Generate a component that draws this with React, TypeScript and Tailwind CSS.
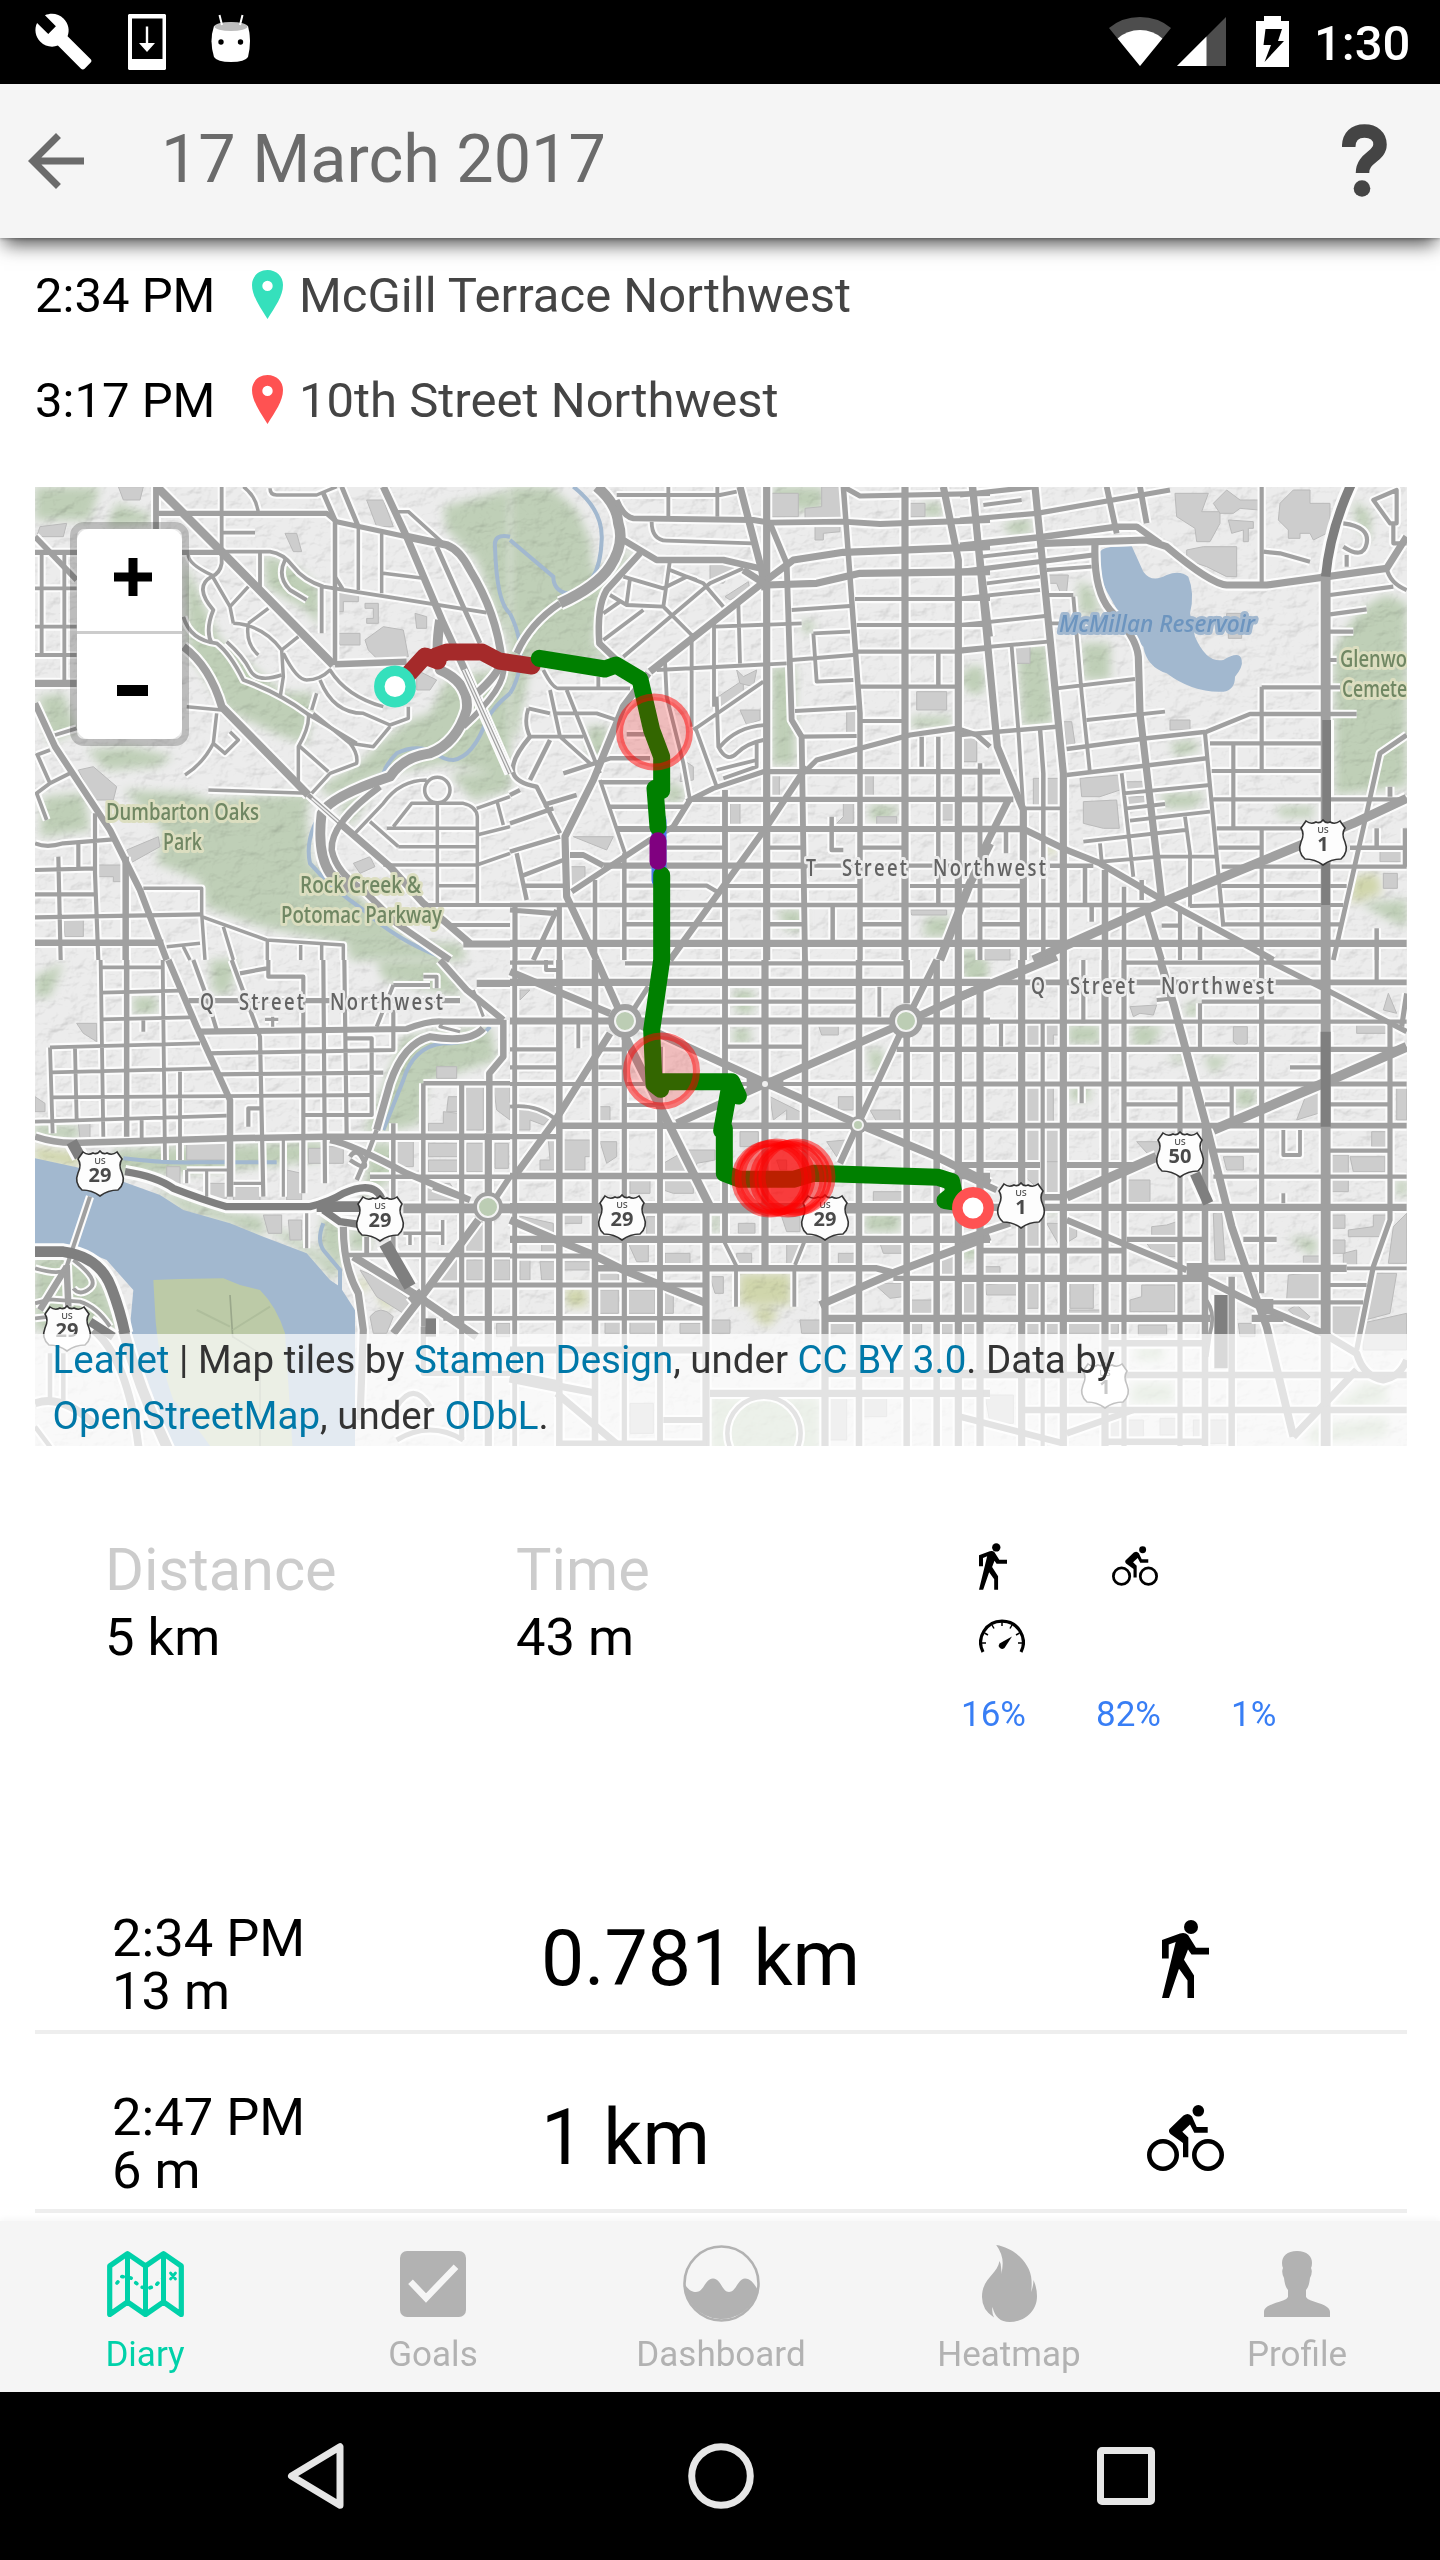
import React from "react";
import { MdArrowBack, MdBuild } from "react-icons/md";

type Road = [number, string];
type Tile = { x: number; y: number; roads: Road[]; dark: Road[]; green: string[]; sand: string[]; creek: string[]; water: string[]; built: string[] };

/* Map sheets. Coordinates inside a sheet are thirds of a pixel. */
const tiles: Tile[] = [
  {
    x: 30, y: 480,
    roads: [
      [24, "M380 20L575 215L910 555"], [12, "M915 120V555"], [18, "M915 553L1130 545"], [20, "M15 610H140"], [16, "M378 20V215"], [14, "M15 217H575"],
      [14, "M385 100H890L920 125L1130 170"], [22, "M1130 170L1250 195Q1290 210 1320 270Q1400 400 1415 540Q1410 580 1330 650"],
      [10, "M575 20V250Q570 280 545 290Q490 320 550 390Q525 450 545 490"], [20, "M1060 20L1130 170L1240 430L1300 560L1440 880"], [16, "M15 170L140 300"],
      [22, "M460 500Q540 560 575 680L835 945"], [20, "M930 1030L1080 1160L1180 1270L1320 1390"], [12, "M835 945L930 1030"],
      [18, "M15 670L75 800L240 1050L330 1230L410 1440"],
      [10, "M15 325H140M15 440H140M15 525H140M35 220V520M103 220V600M75 765L140 745M20 825L60 810M60 910L120 880M20 820L60 910L20 940L50 1020"],
      [11, "M15 1090Q50 1105 100 1090L250 1078M195 1000V1180L205 1440M145 1085V1165M85 1130L92 1440M15 1170L195 1165M15 1243H200M15 1312L515 1303"],
      [18, "M15 1388H400"], [18, "M287 1130V1440"],
      [9, "M340 1225H515V1300L525 1440M515 1310L710 1380L940 1395V1440M580 1340L610 1440M712 1380V1440M812 1395V1440M875 1395V1440M410 1400L510 1390M460 1400L480 1440"],
      [9, "M470 680L575 690M560 700L550 790Q520 850 465 885M550 790L585 820L625 780L600 755M535 930L835 940"],
      [9, "M475 220Q470 250 545 285L600 380L610 430M600 380L655 320M655 430L715 385M610 430Q700 435 755 510L760 590L750 655M655 430Q645 490 685 525M755 510L805 470M760 520Q800 600 830 600Q870 600 900 570Q950 650 1060 680"],
      [10, "M460 410Q480 480 560 490Q600 520 640 600Q750 640 830 700L980 790"],
      [9, "M590 485Q640 530 660 570T755 585M870 600Q910 700 1000 700L1080 735L1135 715V680M850 700L960 790L1030 800L1080 740M860 640L845 690M835 700Q840 740 805 800V910M810 800L895 875M845 940L900 880L980 850Q985 820 960 790"],
      [10, "M575 158H675M690 220V330M575 215H720Q760 220 790 260T880 320L1370 398M765 240Q740 290 780 330L830 360M875 320V460M915 290L940 330"],
      [9, "M985 140V330M1055 160V340M1060 280L1180 295M640 20Q680 50 685 100M720 25Q720 45 740 45H860L920 20M1100 95H1135L1240 190"],
      [13, "M935 20L985 140M880 40L915 120M1220 200L1300 380L1350 490"],
      [28, "M1230 420Q1215 520 1230 570Q1320 610 1310 690Q1280 790 1200 820Q1120 830 1080 890Q900 950 875 1000Q860 1120 900 1180L960 1230"],
      [16, "M1420 560Q1430 620 1300 740"], [18, "M1050 920Q900 1030 905 1110Q920 1180 1000 1230L1100 1330L1260 1440"],
      [9, "M1184 930a38 38 0 1 0 76 0a38 38 0 1 0-76 0M1190 900Q1110 900 1060 970L970 1065M1090 1040L1145 970H1300Q1340 980 1342 1010V1270M1222 970V1270M1070 1045H1340M1105 1100H1340M1020 1025L1105 1100M1060 1155H1340L1440 1120M1225 1217H1340M1340 1065L1440 1040M1340 985L1440 950M1400 960L1420 1035"],
      [11, "M1180 1275H1440M1250 1335H1440"], [20, "M1300 1392H1440"],
    ],
    dark: [],
    green: [
      "M15 20H210L180 120H15Z", "M260 70L360 105V130L230 140Z", "M460 240L570 480L760 640L850 640L830 790L760 770L590 690L480 520Z", "M700 230Q780 230 870 330V440L830 390L710 320Z",
      "M25 650L100 640L140 750L60 790Z", "M170 810L300 800L430 830L380 860L230 870Z", "M280 930L480 940L540 960L840 940L830 1000L840 1150L1040 1290L1140 1390L940 1390L700 1340L530 1280L510 1200L380 1150L400 1050Z",
      "M1240 80L1440 30V500L1400 400L1340 240L1250 150Z", "M1200 700L1250 600L1440 560V890L1250 850L1060 880L900 950L870 920L990 850L1050 790L1140 720Z", "M40 950L160 940L180 1050L30 1070Z", "M1260 880H1440V930L1330 960Z", "M950 1390H1290L1310 1440H960Z", "M930 980L1040 910L960 1040Z",
    ],
    sand: [],
    creek: ["M1440 170Q1390 160 1395 200Q1400 370 1440 400", "M1440 640Q1390 680 1370 720Q1330 830 1270 840Q1240 840 1220 820Q1160 790 1100 820Q1070 850 1060 880Q950 930 900 960Q820 1060 840 1150Q900 1220 1000 1290Q1100 1380 1230 1430"],
    water: [],
    built: ["M1005 480L1060 440L1120 450L1135 530L1040 535L1015 510Z", "M920 340H985V365H940V395H920Z", "M1005 370H1045V430H1010V415H1030V385H1005Z", "M145 870L190 860L260 920L250 960H190Z", "M290 1110L385 1070L390 1100L300 1150Z", "M205 1155H275V1205H250V1190H205Z", "M100 1320H160V1370H105Z", "M1160 570L1220 600L1200 630L1160 630Z", "M1155 400L1190 410V445H1160Z", "M30 140L110 130L100 170H20Z", "M1010 60H1060L1090 140H1040Z", "M265 20H340L330 60H280Z", "M765 160H800L815 215H790Z", "M970 1150L1020 1130L1035 1160L990 1180Z", "M920 460H990V495H930Z"],
  },
  {
    x: 510, y: 480,
    roads: [
      [20, "M770 20V1440M1185 20V1440"], [20, "M1300 20L1345 240V1440"], [16, "M1385 20L1440 470"], [15, "M1000 20L1020 290L1050 700V1440"],
      [20, "M690 20L755 270L765 330"], [16, "M780 130L830 250L845 720L875 770L885 1440"],
      [30, "M260 20Q320 70 325 130Q345 190 300 260Q260 320 150 370"], [18, "M150 370Q60 430 20 520"],
      [16, "M320 60Q340 110 370 115L730 120L780 128L1000 125L1110 132L1440 120"], [10, "M320 45H630L680 35M475 20V110M622 20V110"], [14, "M1000 20L1050 48L1440 40"],
      [10, "M425 125Q425 180 470 182L730 190"], [18, "M340 180L440 240H640L750 265M390 220L290 330Q260 380 268 490L320 540"],
      [20, "M420 575L750 315L850 240L1000 217L1440 200"], [20, "M700 270L770 315L920 310L1050 280L1440 275"],
      [10, "M340 290L460 325L530 290L560 300M360 295L350 370M480 240L460 380M300 345L350 375L460 380L545 465M480 270L580 310L640 380M280 480L400 390M340 530L600 310L700 265M280 400L330 365"],
      [10, "M545 460V740M612 430V680M685 370L690 550M615 440L875 430M440 570L830 550M845 540L1030 525M845 390L1020 378M910 460L1020 455M910 460L920 605L1030 600"],
      [11, "M1035 357H1440M1040 435H1440M1040 515H1350L1440 505M1050 620H1345M1050 723H1185M855 693L1040 683M875 770L1040 768"], [12, "M1285 515V620M1285 770V1270M1235 770V860"],
      [10, "M550 750L760 605M620 650L625 800Q650 850 680 820T760 780M630 800Q680 740 765 735M620 870L740 840M640 895L740 860V790"],
      [14, "M530 965L610 925L760 875H1440M540 958H1440M890 870L920 840L1200 765L1340 745L1400 765L1440 800"], [18, "M890 860L770 1040L480 1440"],
      [17, "M320 1047H1440M280 1157H890"], [11, "M470 1103H640M775 1103H880M1050 1103H1185M770 1157H1440M345 1217H590L630 1240M640 1218H1045M1200 1218H1440"],
      [12, "M0 1275H1440M345 1333H640M770 1333H885M1050 1333H1185"], [20, "M0 1390H1440"], [16, "M645 930V1440"], [12, "M1410 850V1440M968 1280V1380M965 1010V1110H1000M255 1200V1440M343 1120V1440"],
      [10, "M465 545L470 650L520 850L540 960M555 740L620 920"], [20, "M415 580L340 680L250 900L165 1070L170 1250L260 1440"],
      [10, "M100 570Q130 630 150 625H360M265 590V630M120 630L150 770L240 850M170 630L270 880M270 900L345 1120M55 685Q40 730 60 770H220M55 685L120 700M130 700H260L320 720"],
      [12, "M60 770Q0 840 10 880Q20 910 80 920L150 1060M120 780L60 900M160 880L300 835H420M0 945L30 930M270 907H430M300 980H530M100 975L200 945M0 1030L130 985M0 1115L150 1070M20 1120L50 1260M30 1190L160 1140M40 1217H170M350 763H420"],
      [16, "M180 1125H220L280 1157M185 1235L420 1080L490 1040L540 960"], [14, "M0 1290L130 1300M140 1290L70 1440M15 1280V1440M148 1280V1440"], [24, "M1440 1090L1380 1210L1290 1440"],
    ],
    dark: [],
    green: ["M0 20H120L200 90L240 180L250 280L380 200L280 330L250 490L300 530L60 560L20 760L0 780Z", "M790 20H940V90H790Z", "M785 560H855V855H785Z", "M230 740H290V830H240Z", "M480 900L530 940L500 970H460Z", "M870 420L920 430L890 470Z", "M1205 710H1330L1320 740H1200Z", "M1240 70H1295V110H1240Z", "M1370 560H1420V640H1375Z", "M1080 970L1170 980L1140 1020H1080Z", "M800 1290H880V1350H830Z", "M1250 1310H1320V1370H1240Z"],
    sand: [],
    creek: ["M190 20Q280 90 275 180Q270 330 170 340Q130 330 130 290L0 180", "M0 400Q40 480 30 560Q20 610 0 640"],
    water: [],
    built: ["M785 40H865V110H785Z", "M885 85L935 80V20H995V115H885Z", "M915 135H990V155L940 160V180H915Z", "M1220 635H1310V690H1220Z", "M1360 765H1400V845H1360Z", "M1010 690H1045V760H1010Z", "M1055 880H1090V950H1055Z", "M1000 970H1030V1030H980L1000 1010Z", "M1100 1010H1160V1035H1100Z", "M660 970H690V1035H660Z", "M780 880H808V950H780Z", "M600 255H680L640 310L600 300Z", "M645 350L715 305L720 330L660 360Z", "M625 650L700 600L700 640L630 680Z", "M690 690H750V720L710 735Z", "M520 840L550 860V900L510 905Z", "M680 570L700 590L740 570L730 620L690 610Z", "M1200 70H1245V110H1200Z", "M1200 1290H1310V1305H1205Z", "M1295 970H1330V1020H1295Z", "M180 1160H225V1210L185 1220Z", "M190 1070H310L290 1110L240 1090Z"],
  },
  {
    x: 960, y: 480,
    roads: [
      [20, "M38 20L112 800L190 990V1440M225 20L310 880V1440"], [16, "M440 20L470 160M540 20L560 130"], [14, "M0 45L225 20M0 120L230 100L630 30"], [18, "M0 197L240 172L470 140L530 140L600 190"],
      [20, "M250 190L560 180L620 200Q750 310 800 315H920L1280 265L1340 170"], [14, "M0 275L400 225"], [20, "M405 190Q400 330 450 390Q530 470 535 530L540 700L605 1260"],
      [10, "M70 75L185 60M65 230L240 210M80 310L240 290M260 270L395 260M0 355L240 330M0 435L255 408M270 430L330 430M0 508L265 485M340 350L365 640L390 880M340 345H265M155 500L175 750L190 990M290 625L525 597M380 720L615 695"],
      [12, "M320 807L560 775L740 755L870 702H1190M320 885L740 835M0 765L290 740M240 745L250 880V1440"], [10, "M485 880L520 1190M490 940L750 915M500 985L615 972M510 1022L750 995M370 1085L675 1050M425 1145L600 1130H770M190 985H300M420 1090L425 1145M675 1010L690 1120V1280"],
      [11, "M735 760L790 1340M750 790H1085M820 790V1040M905 20V310M905 620V870M905 1050V1440M755 873H1090M760 958H1340M770 1045H1090M905 622H1140M775 1103H905M785 1160H1340M785 1218H1160M690 1278L850 1275H1150M790 1333H1140M605 1337H660M660 1280V1440"],
      [28, "M1097 280V1440"], [11, "M1110 345L1300 320M1110 403L1220 388M1110 455H1180M1110 540H1130M1280 265Q1290 310 1340 330M1240 60L1310 30V130H1290ZM1300 130V190H1340M1150 130Q1230 140 1220 190T1150 200M1160 225V260M910 215L960 220L1050 245"],
      [13, "M1340 765L1260 820L1220 1000L1120 1440M1290 920V950"], [26, "M1340 955L1180 1030L600 1270L220 1440"],
      [18, "M0 1047H190L320 1110L420 1150L600 1255L850 1390L940 1440"], [16, "M0 875H120M0 958H160"], [20, "M145 960L65 1120"],
      [12, "M270 1157H400M60 1218H180M0 1275H600M60 1333H180"], [20, "M0 1390H1340"], [12, "M60 870V1440M375 1160V1275M138 1050V1120M492 1220V1440M395 1280V1325M720 1340V1440M1250 1345V1440M1250 1045V1100M1170 1103H1340M1335 1045V1160M545 1200V1260"], [18, "M435 1170V1440M560 1290L605 1440"],
    ],
    dark: [[28, "M1175 10Q1110 150 1097 290"], [26, "M1100 720V1030M1097 1150V1275"]],
    green: ["M130 130L210 115L215 160L150 165Z", "M1120 520Q1180 380 1280 345L1340 370V920L1125 945V700Z", "M355 300L400 330L420 400H360Z", "M365 490H450V600H370Z", "M170 510L260 490L280 730L190 740Z", "M630 790L700 780L720 810L650 830Z", "M600 940H740L700 985H620Z", "M950 980H1060V1010H960Z", "M1200 1270L1340 1260V1340L1290 1320Z", "M1180 60L1230 100V190L1190 130Z", "M0 580H60V620H10Z", "M0 1410H60V1440H0Z"],
    sand: ["M1180 1190L1250 1180L1265 1240L1170 1270Z", "M255 1095H285V1120H260Z"],
    creek: [],
    water: ["M420 215Q430 200 470 200L515 198L550 275Q575 310 620 285Q660 270 685 290Q705 340 690 400L705 470Q740 550 790 540Q840 510 845 540Q850 560 825 590Q825 630 790 635Q700 640 620 580Q560 560 550 500L510 460L455 360Q425 310 425 290Z"],
    built: ["M645 40H745L725 95H780V130L750 185H710L705 145L650 110Z", "M760 70L800 30L840 60H895V90L840 85L820 100H780Z", "M960 70L1000 30H1050V70H1110V155L1060 180L1050 160H1020V175H985V150L955 120Z", "M680 210L730 200H830V290H800L740 260L680 240Z", "M805 120L880 125V145H865V185H850V150L815 160Z", "M370 965L470 960L478 1045H430L370 1030Z", "M360 895L480 885V930L420 950H365Z", "M495 905H555V930H495ZM505 950H560V975H505Z", "M265 285H325L320 335H300L290 310H265Z", "M165 500H210V550H165Z", "M5 765H50V845H5Z", "M310 725H335L345 790L320 800Z", "M220 895H300V975H220Z", "M630 720H690V750H630Z", "M1260 1110H1330V1145H1260Z", "M1270 1180H1312V1225H1270Z", "M70 1400H150V1440H75Z", "M800 400H845V475H805V460H830V440H800Z"],
  },
  {
    x: 30, y: 960,
    roads: [
      [18, "M15 530Q80 552 150 548L600 535L880 530H1440"], [11, "M180 710L110 920"], [18, "M110 915L115 1040M110 920L30 1050"], [10, "M15 925Q80 945 110 930M130 900Q210 960 180 985T130 985M15 1030L60 1018L150 1025Q200 1040 240 1100M15 1075L60 1070"],
      [28, "M1120 745H1440"], [15, "M290 0V530"], [10, "M212 0L220 530M215 22H400M398 0L405 600M215 98L450 92M215 178L480 172M340 175V215M60 262L510 250M60 262L68 520M135 265L140 480M65 337L550 325M65 412L1025 405M15 485L590 467M450 335V600M335 480V540"],
      [18, "M415 0L500 200L600 420V710"], [17, "M510 215L1130 207Q1200 180 1240 185H1420"], [11, "M530 280L1090 270V150M560 343L1060 338M820 465H1025V235H950M490 0L530 110L560 210M605 0L690 230L700 710M630 40L710 25M715 0V50H820V700M880 0L885 670M943 0L950 530M655 500V445H695"],
      [8, "M760 540V710M830 760V865M470 630H600M530 630V710M470 630V670M610 670H695M705 178H745M728 170V200"], [10, "M1090 75H1200M1090 75L1040 200M1180 50H1220V85"],
      [14, "M475 122H1290"], [18, "M900 540Q960 550 1130 640L1320 720M1210 680L1320 720"], [12, "M1130 650H1440M1020 650H1130M1090 490V880M1180 370V1100M1180 370H1440M950 885H1440"], [14, "M1295 370V1440"],
      [20, "M1375 780V1500M1375 520V710"], [18, "M1420 180V290L1378 340V520"], [18, "M1230 0L1310 90L1420 180"], [20, "M1340 70H1440"], [8, "M1360 170L1330 90M1240 185L1230 200L1290 215"],
      [20, "M1360 205Q1320 250 1200 230Q1120 250 1080 370L1040 510"], [12, "M1040 510L1010 590L980 660M960 590Q980 560 1000 600T960 600"], [20, "M940 800Q940 920 985 1000L1000 1110L990 1380"],
      [22, "M970 890L1150 1000L1340 1130M1345 780L1190 990L1090 1120"], [13, "M1200 975H1440M1240 1075H1440M1010 830V880"], [9, "M1120 820H1235M1238 780V855M1140 820V855"], [16, "M1400 710L1440 650"], [44, "M1150 1000L1175 1030"],
      [30, "M280 1110Q330 1300 430 1500"], [22, "M190 1110Q300 1200 330 1500M15 1330Q100 1300 200 1400"], [12, "M60 1180V1330M15 1400L90 1500M100 1180V1320"], [14, "M1100 1340Q1150 1260 1200 1340M1180 1100V1240H1440M1100 1440Q1200 1380 1300 1440"],
    ],
    dark: [[34, "M125 545L150 590"], [22, "M285 635Q380 650 430 685Q520 720 590 740H840Q900 725 940 700Q1030 660 1055 715M880 750L930 785L1000 795"], [32, "M860 740H1000"], [38, "M1065 850L1140 980"], [32, "M1202 1075V1130"], [32, "M15 875H100Q210 890 245 985Q270 1050 285 1120"], [26, "M180 1085L250 1130"]],
    green: ["M1040 0H1230L1300 110L1060 60Z", "M1380 200L1400 300L1190 365L1170 490L1090 510L1000 520L1060 380L1120 230Z", "M540 0H620L600 100H550Z", "M310 110H380V160H310Z", "M250 570L880 545V600L500 640H260Z", "M360 680L600 760L700 770V830L600 790L460 750Z", "M700 800L780 820L925 920L915 960L830 880Z", "M15 890H110Q180 910 230 990L270 1110H15Z", "M880 760L940 790V930L870 860Z", "M15 50L100 10L60 110H15Z", "M1020 550H1090V650L1000 720Z", "M960 810H1020V870H960Z", "M15 490L150 500L140 540L15 530Z"],
    sand: ["M15 560L140 580L150 625L15 600Z", "M980 950L1020 970L1000 1000ZM1040 1000L1100 1010L1070 1050Z"],
    creek: ["M280 595Q400 610 500 607H740", "M1380 200Q1340 250 1240 250Q1150 260 1120 360L1060 510", "M880 790Q860 840 880 870L930 930V1000"],
    water: ["M15 595L140 622L280 665L390 705L460 750L600 790L700 830L830 880L900 960L930 980L975 1050V1500H440L330 1200L300 1100L310 990L230 900L130 860H15Z"],
    built: ["M470 550H585V600H470Z", "M770 630L815 640V720H770Z", "M700 765H755V820H715Z", "M775 780H815V840H780Z", "M835 565H875V610H835ZM890 560H940V610H895Z", "M610 680H690V730H610ZM535 670H590V715H540Z", "M145 490H180V535H150Z", "M1195 550H1285V590H1195ZM1195 600H1285V635H1195Z", "M1195 490H1240V455L1285 460V515H1195Z", "M1255 410H1285V455H1250Z", "M1310 380H1360V510H1305Z", "M1390 375H1440V480L1400 450Z", "M1310 550H1360V635H1310ZM1395 550H1435V625H1395Z", "M1100 545H1150V620H1100Z", "M1190 670H1260L1290 720H1190Z", "M1310 830L1360 780V870L1310 880Z", "M1230 920L1290 870V965H1230ZM1310 900H1360V960H1310ZM1390 900H1440V960H1390Z", "M990 930L1060 960L1140 1020L1120 1060L1040 1010Z", "M1020 1070Q1050 1030 1090 1070L1070 1120H1030Z", "M1400 1090H1440V1130H1400Z", "M15 410L45 430V455H15Z", "M140 190H200V245L160 220Z", "M1220 320H1280V355H1220Z", "M410 620H450V680H410Z"],
  },
  {
    x: 510, y: 960,
    roads: [
      [11, "M345 10H1185M0 8H130M470 125H1040M0 268H140M265 268H340M650 260H885M265 322H340M0 322H140M0 372H1440M350 435H450M140 495H1440"], [20, "M0 67H1440M0 183H300M390 183H1140M1235 183H1440"], [18, "M140 497H1440M0 648H1440"], [30, "M0 745H1440"], [20, "M0 838H1440"],
      [14, "M1160 268H1440M0 888H250M1150 955H1440M0 975H590M0 530H140"], [18, "M250 925H1100L1160 940"], [12, "M0 1075H590"], [20, "M950 1075H1440"],
      [18, "M148 0V1500M255 0V1500M885 0V720M1047 0V1500M1190 230V1500M1190 0V130M1280 0V1500"], [13, "M14 0V1500"], [14, "M343 230V1500"], [16, "M450 260V1500M645 0V840M1410 100V1500"], [20, "M588 750V1500M945 840V1500M1345 0V1500"], [20, "M765 0V925"], [10, "M205 190V265M1108 80V170M108 0V30H150"],
      [20, "M0 35L300 160M260 0L340 180M300 220L130 490L20 640"], [14, "M415 80L370 150"], [24, "M345 230L600 740"],
      [22, "M380 190L650 315L770 370L1040 490L1280 590L1440 670M500 490L770 370L1180 190L1440 70"], [18, "M1280 0L1190 180L1045 490L990 610"],
      [22, "M0 780L140 840L250 885L340 930L590 1030M930 1035L1160 935L1440 830"], [10, "M640 840L680 920M885 840L855 915M678 930V1040M853 930V1040M0 440Q80 430 140 480"],
      [20, "M0 1250L260 1300M140 1300L330 1460M0 1170H590M600 1300H1440M950 1240H1440"], [34, "M0 1250L150 1280M710 370L820 370"], [16, "M140 1450H590M460 1380H590"], [12, "M652 1420a110 110 0 1 0 220 0a110 110 0 1 0-220 0"],
    ],
    dark: [],
    green: ["M670 90H730V160H680Z", "M670 205H720V250H670Z", "M1065 760H1170V815H1065Z", "M605 758H628V818H605Z", "M1370 0H1430V50L1380 75Z", "M1070 270H1120V340H1090Z", "M600 1310H930V1490H600Z", "M1360 860H1400V890H1360Z"],
    sand: ["M688 940H843V1035H688Z", "M720 1060L760 1040L810 1060L770 1100Z", "M165 985H230V1040H170Z"],
    creek: [], water: [],
    built: ["M25 435L80 440L125 470L100 495L60 480V510H25Z", "M265 440H300V485H265Z", "M115 540H240V590H225V630H90V600H120Z", "M270 545H320V590L290 610Z", "M30 90H60L30 120Z", "M530 570H615V600L560 610V635H460V610Z", "M460 660H550V700H490L460 690Z", "M360 660H420V700H360Z", "M690 515H745V560H690ZM800 600H830V630H810Z", "M780 410L880 460V485H830V450L790 480Z", "M950 545L1010 540L980 590Z", "M985 410H1030V450H985ZM1080 450H1170V485H1100Z", "M925 195H985V225H935Z", "M160 760H215V790H160Z", "M410 770H440V825H410Z", "M685 790H735V820H685ZM815 770H870V815H830Z", "M1090 695H1180V730H1090Z", "M15 765L130 790V830H70Z", "M95 845H135V875H95Z", "M355 850H415V905H380Z", "M465 880H540V915H465Z", "M680 880H725V915H680ZM830 850H870V915H830Z", "M985 880H1035V915H985ZM1110 850H1180V880H1120Z", "M160 905H325V965H270V930H160Z", "M30 900H60V960H30ZM90 905H135V960H95Z", "M265 990H325V1060H265Z", "M350 990H435V1060H350ZM460 1000H490V1060H465Z", "M600 950H640V1000H615Z", "M285 1085H330V1120H285ZM360 1085H440V1120H360ZM510 1090H575V1120H510Z", "M600 1080H660V1120H605ZM870 1080H930V1120H875Z", "M955 1085H1040V1120H955ZM1200 1085H1235V1120H1200ZM1295 1085H1335V1120H1295ZM1360 1085H1400V1120H1360Z", "M1090 970H1180V1010L1140 1015Z", "M1200 1020H1270V1060H1200Z", "M1290 880H1335V945H1290ZM1360 970H1400V1060H1360Z", "M960 1310H1010V1440H960ZM1060 1300H1130V1370H1060Z", "M360 1330H430V1420H360Z"],
  },
  {
    x: 960, y: 960,
    roads: [
      [20, "M60 90V1500M185 0V1500M310 0V1500M435 0V1500"], [11, "M248 180V1500M370 0V190M720 130V270M123 190V260M365 375V430M815 375V490M1250 0V60"], [14, "M492 0V1500M660 375V1500M905 0V1000"], [18, "M735 500V1500M815 950V1500"], [28, "M1097 0V1500"], [14, "M1290 180V780L1240 920L1190 1170M1340 100L1325 200"],
      [11, "M490 8H1090M725 125H1090M0 185H1340M490 433H660M735 433H815M1110 433H1290M990 322H1090M765 572H900M1110 572H1290M760 650H1340M920 1027H1210M1110 975H1220"], [16, "M0 67H1340M320 615H540M0 615H240M0 497H1340M60 872H490"], [14, "M0 268H1340M0 372H1340M500 838H740M850 838H950"],
      [20, "M0 742H1340M0 955H740M690 925H1160M0 1075H750M875 1075H970"], [10, "M1160 925H1340"], [18, "M180 1350H1340M0 1245H1340M435 1150H735M435 1445H735"],
      [24, "M0 110L290 -10"], [22, "M600 0L640 130L745 520L815 800L880 990L920 1100L1000 1430"], [28, "M1340 260L1090 370L760 510M590 590L320 710"], [18, "M250 712H320M110 690L0 640M0 840L150 790M320 780L680 930"], [15, "M920 0L1110 95L1340 215"],
      [20, "M740 960L900 1040L1090 1120L1190 1180Q1210 1250 1270 1260Q1320 1250 1340 1200M1190 1230L1000 1430"], [44, "M680 932H745M900 1040H940"], [10, "M730 1010Q770 1050 750 1120L740 1190M970 510V585H1020V510M970 700V730M590 120L640 115"], [18, "M0 1370L310 1450M320 1420L520 1350M1100 1340V1500"],
    ],
    dark: [[30, "M1097 215V500"], [32, "M705 640L745 730"], [40, "M783 1005V1225"]],
    green: ["M10 0H70V50L20 75Z", "M325 195H420V250H325Z", "M520 195L610 200L570 260H520Z", "M620 290L690 280L660 310Z", "M730 290H810L760 340Z", "M825 385H885V440H830Z", "M330 380H390V420H330Z", "M985 830L1075 840L1060 890Z", "M255 730H295V755H255Z", "M1310 660H1340V705H1310Z", "M680 130H715V170H680Z", "M10 860H45V890H10Z", "M520 1270H640V1330H510Z", "M1120 1340L1210 1270H1280V1330L1180 1345Z", "M1060 1400L1280 1370V1430L1040 1450Z", "M530 1160H610V1200H530Z"],
    sand: [], creek: [], water: [],
    built: ["M195 380H280V490L298 515V605H195Z", "M195 605H298V700L250 700L195 650Z", "M195 190H240V260H195ZM260 195H300V225H280V260H255Z", "M505 660H570V725H505Z", "M510 140L590 135L580 165L540 160L520 170Z", "M820 200H862V250L840 260L820 245Z", "M575 800L620 795L650 785V825H575Z", "M560 850H650V890H590Z", "M510 1020L545 1010V975H645V1055H510Z", "M320 1050H420V1120H320Z", "M330 970H400V1045H330Z", "M195 965H235V1045H195ZM75 975L170 965V1005H80Z", "M0 970H48V1060H0Z", "M195 1080H295V1120H195ZM0 1090H50V1120H0Z", "M195 790H235V860H195ZM260 790H350V830L300 860Z", "M535 1095H620V1125H535ZM835 1090H885V1130H840ZM450 1085H475V1120H450Z", "M760 760L785 755L795 900H765Z", "M985 945L1085 935V1018H980Z", "M1110 1040H1205L1190 1130H1110Z", "M1230 940H1310L1290 1060L1215 1080Z", "M1205 1090L1340 1060V1170H1210Z", "M1115 765H1155V805H1115ZM1165 810L1240 800V765H1280V830H1165ZM1115 840H1155V880L1115 880ZM1150 880L1190 870V915H1150Z", "M1110 585H1165V640H1110ZM1170 590H1275V635H1180Z", "M1235 515H1280V560H1235Z", "M1190 195H1280V220H1190Z", "M1270 150L1285 100L1310 160Z", "M1115 660H1165V695H1115Z", "M790 590H850V630H800Z", "M1040 400L1075 390V460L1010 480Z", "M985 1050L1010 1035L1050 1070L1030 1090Z", "M530 545H620L580 600Z", "M70 920H120V945H70Z", "M1030 888H1085V910H1030Z", "M1300 800L1340 760V910H1285Z", "M1310 380H1340V480H1310Z", "M75 1305H160V1390H90ZM450 1380H550V1430H450ZM600 1375H670V1425H600ZM700 1380H830V1450H700Z"],
  },
];

const shields = [[100, 1173, "29"], [380, 1218, "29"], [67, 1328, "29"], [622, 1217, "29"], [825, 1217, "29"], [1021, 1205, "1"], [1180, 1154, "50"], [1323, 842, "1"], [1105, 1385, "1"]] as const;

function Sheet({ t, children }: { t: { x: number; y: number }; children: React.ReactNode }) {
  return <g transform={`translate(${t.x} ${t.y}) scale(.33333)`}>{children}</g>;
}

function Label({ x, y, w, fill = "#636363", halo = "#ececec", italic = false, spaced = false, children }: { x: number; y: number; w: number; fill?: string; halo?: string; italic?: boolean; spaced?: boolean; children: string }) {
  const squeeze = spaced ? 0.8 : 1;
  return (
    <text transform={`translate(${x} ${y}) scale(${squeeze} 1)`} textLength={w / squeeze} lengthAdjust={spaced ? "spacing" : "spacingAndGlyphs"} fontSize={23} fontFamily="'Open Sans', 'Noto Sans', sans-serif" fontWeight={600} fontStyle={italic ? "italic" : "normal"} fill={fill} stroke={halo} strokeWidth={6} strokeLinejoin="round" paintOrder="stroke">
      {children}
    </text>
  );
}

function StreetLabel({ x, y, letter, step }: { x: number; y: number; letter: string; step: number }) {
  return (
    <g>
      <Label x={x} y={y} w={letter === "T" ? 10 : 14}>{letter}</Label>
      <Label x={x + step} y={y} w={65} spaced>Street</Label>
      <Label x={x + step + 91} y={y} w={113} spaced>Northwest</Label>
    </g>
  );
}

function MapCanvas() {
  return (
    <svg viewBox="35 487 1372 959" className="block h-full w-full">
      <defs>
        <filter id="soft" x="-20%" y="-20%" width="140%" height="140%"><feGaussianBlur stdDeviation="14" /></filter>
        <filter id="relief" x="0" y="0" width="100%" height="100%">
          <feTurbulence type="fractalNoise" baseFrequency="0.05 0.07" numOctaves="4" seed="8" result="n" />
          <feDiffuseLighting in="n" surfaceScale="5" diffuseConstant="1.15" lightingColor="#fff"><feDistantLight azimuth="225" elevation="60" /></feDiffuseLighting>
        </filter>
      </defs>
      <rect x="35" y="487" width="1372" height="959" fill="#ececec" />
      {tiles.map((t, i) => (
        <Sheet key={i} t={t}>
          <g filter="url(#soft)">
            {t.green.map((d) => <path key={d} d={d} fill="#bfcfb7" />)}
            {t.sand.map((d) => <path key={d} d={d} fill="#d0d6ac" />)}
          </g>
        </Sheet>
      ))}
      <rect x="35" y="487" width="1372" height="959" filter="url(#relief)" opacity=".26" style={{ mixBlendMode: "multiply" }} />
      {tiles.map((t, i) => (
        <Sheet key={i} t={t}>
          {t.built.map((d) => <path key={d} d={d} fill="#cdcdcd" stroke="#bababa" strokeWidth="3" />)}
          {t.water.map((d) => <path key={d} d={d} fill="#a2b8cf" />)}
          {t.creek.map((d) => <path key={d} d={d} fill="none" stroke="#a2b8cf" strokeWidth="12" />)}
        </Sheet>
      ))}
      <Sheet t={{ x: 30, y: 960 }}>
        <path d="M370 960L450 957L580 955L630 975L690 990Q740 1040 765 1120L790 1500H570Q480 1370 430 1320Q380 1180 375 1050Z" fill="#bccaa7" />
        <path d="M600 1005L608 1130L690 1180V1500" fill="none" stroke="#9aa78b" strokeWidth="5" />
        <path d="M600 1100L500 1050M608 1110L720 1040" fill="none" stroke="#afbe9c" strokeWidth="6" />
      </Sheet>
      {tiles.map((t, i) => (
        <Sheet key={i} t={t}>
          <g fill="none" stroke="#fcfcfc" strokeLinejoin="round">
            {t.roads.map(([w, d]) => <path key={d} d={d} strokeWidth={w + 14} />)}
            {t.dark.map(([w, d]) => <path key={d} d={d} strokeWidth={w + 18} />)}
          </g>
        </Sheet>
      ))}
      {tiles.map((t, i) => (
        <Sheet key={i} t={t}>
          <g fill="none" stroke="#a0a0a0" strokeLinejoin="round">
            {t.roads.map(([w, d]) => <path key={d} d={d} strokeWidth={w + 1.5} />)}
          </g>
        </Sheet>
      ))}
      {tiles.map((t, i) => (
        <Sheet key={i} t={t}>
          <g fill="none" stroke="#7f7f7f" strokeLinejoin="round">
            {t.dark.map(([w, d]) => <path key={d} d={d} strokeWidth={w} />)}
          </g>
        </Sheet>
      ))}
      {/* Traffic circles */}
      {[[625, 1021, 17, 10], [906, 1021, 17, 10], [858, 1125, 9, 5], [488, 1207, 15, 10]].map(([x, y, r, g]) => (
        <g key={`${x}-${y}`}>
          <circle cx={x} cy={y} r={r} fill="#a0a0a0" />
          <circle cx={x} cy={y} r={g} fill="#bccdb4" stroke="#f4f4f4" strokeWidth="2" />
        </g>
      ))}
      <circle cx="765" cy="1084" r="3" fill="#f0f0f0" />
      {/* Bridge decks */}
      <Sheet t={{ x: 30, y: 480 }}>
        <path d="M1300 570L1440 880M845 955L925 1025" fill="none" stroke="#fafafa" strokeWidth="24" />
        <path d="M1300 570L1440 880M835 945L930 1030" fill="none" stroke="#a0a0a0" strokeWidth="12" />
        <path d="M1300 570L1440 880M845 955L925 1025" fill="none" stroke="#eee" strokeWidth="5" />
      </Sheet>
      <Label x={106} y={820} w={153} fill="#708763" halo="#dcdec0">Dumbarton Oaks</Label>
      <Label x={163} y={850} w={39} fill="#708763" halo="#dcdec0">Park</Label>
      <Label x={300} y={893} w={121} fill="#708763" halo="#dcdec0">Rock Creek &amp;</Label>
      <Label x={281} y={923} w={161} fill="#708763" halo="#dcdec0">Potomac Parkway</Label>
      <Label x={1340} y={667} w={67} fill="#708763" halo="#dcdec0">Glenwo</Label>
      <Label x={1342} y={697} w={65} fill="#708763" halo="#dcdec0">Cemete</Label>
      <Label x={1059} y={632} w={196} fill="#6d95bf" halo="#a2b8cf" italic>McMillan Reservoir</Label>
      <StreetLabel x={806} y={876} letter="T" step={36} />
      <StreetLabel x={200} y={1010} letter="Q" step={39} />
      <StreetLabel x={1031} y={994} letter="Q" step={39} />
      {shields.map(([x, y, n]) => (
        <g key={`${x}-${y}`} transform={`translate(${x} ${y})`}>
          <path d="M-17-21Q-12-17-7-20Q-3-18 0-22Q3-18 7-20Q12-17 17-21L22-14Q18-8 22 0Q26 10 18 17Q8 17 0 23Q-8 17-18 17Q-26 10-22 0Q-18-8-22-14Z" fill="#fdfdfd" stroke="#333" strokeWidth="1.6" />
          <text y="-9" textAnchor="middle" fontSize="9" fontWeight="600" fontFamily="'Open Sans', sans-serif" fill="#555">US</text>
          <text y="9" textAnchor="middle" fontSize="20" fontWeight="700" fontFamily="'Noto Sans', 'Open Sans', sans-serif" fill="#4a4a4a">{n}</text>
        </g>
      ))}
      {/* Trip */}
      <g fill="none" strokeLinecap="round" strokeLinejoin="round" strokeWidth="17">
        <path d="M395 686L403 680L425 656L438 661L436 656L447 652H482L499 661L532 666" stroke="#a52a2a" />
        <path d="M659 820V880" stroke="#4a78e8" strokeWidth="15" />
        <Sheet t={{ x: 510, y: 480 }}>
          <g strokeWidth="51">
            <path d="M88 535L285 567L318 555L390 598L425 750L455 830V932L435 925L444 1042" stroke="#008000" />
            <path d="M455 1185V1440L425 1650L432 1812L452 1828L455 1805H665L685 1848L657 1830L635 1952L643 1945V2080L690 2098H850L910 2080L1285 2092L1325 2105L1332 2140L1305 2162L1360 2170" stroke="#008000" />
            <path d="M444 1082V1144" stroke="#800080" />
          </g>
        </Sheet>
      </g>
      <g fill="#f00" fillOpacity=".2" stroke="#f00" strokeOpacity=".5" strokeWidth="7">
        {[[654.5, 732], [661.5, 1071], [770, 1179], [773, 1178], [777, 1177], [788, 1179], [793, 1178], [797, 1177]].map(([x, y]) => <circle key={x} cx={x} cy={y} r="35" />)}
      </g>
      <circle cx="395" cy="686.5" r="15.7" fill="#fff" stroke="#35e0bc" strokeWidth="10.5" />
      <circle cx="973" cy="1208" r="15.7" fill="#fff" stroke="#ff5252" strokeWidth="10.5" />
    </svg>
  );
}

function Walk({ className }: { className: string }) {
  return (
    <svg viewBox="0 0 47 78" className={className}>
      <circle cx="29" cy="7" r="7" />
      <path d="M0 20L18 13.5Q23 12 26 15L34 27.7H47V34.4H29.5L26 29.5L22 39.7L32 55.4V78H25.5V60.5L17 48.7L7 78H0L13.7 22L6.7 24.6V38.4H0Z" />
    </svg>
  );
}

function Bike({ className }: { className: string }) {
  return (
    <svg viewBox="0 0 77 66" className={className}>
      <circle cx="51.3" cy="5.8" r="5.8" />
      <g fill="none" stroke="#000" strokeWidth="4.6"><circle cx="16" cy="50" r="13.7" /><circle cx="61" cy="50" r="13.7" /></g>
      <path d="M22.5 24L36.5 10.5Q41.5 7 45 11.5L49.7 21.9H60.7V27.7H47.3L43 19.6L35.3 26.8L41.3 32.6V52.2H36V38L23.5 29Q21 26.500 22.5 24Z" />
    </svg>
  );
}

function Gauge({ className }: { className: string }) {
  return (
    <svg viewBox="0 0 46 34" className={className} fill="none" stroke="#000">
      <path d="M4 33A21.300 21.300 0 1 1 42 33" strokeWidth="3.200" />
      <path d="M3 24H7M39 24H43M5.500 14L9 16M40.500 14L37 16M13 6L15 9.500M33 6L31 9.500M23 2.500V7" strokeWidth="1.500" />
      <path d="M20.500 24.500L33 17.400L25.500 29Q22.500 31 20.500 28.500Q19 26.500 20.500 24.500Z" fill="#000" stroke="none" />
    </svg>
  );
}

function StatusBar() {
  return (
    <div className="flex h-[84px] items-start bg-black text-white">
      <MdBuild className="mt-[11px] ml-[33px] h-[61px] w-[61px]" />
      <svg viewBox="0 0 38 56" className="mt-[14px] ml-[34px] h-[56px] w-[38px]" fill="#fff">
        <path fillRule="evenodd" d="M1 0H37L38 1V55L37 56H1L0 55V1ZM4 4.500V45H34.500V4.500Z" />
        <path d="M17.800 12.500H20.200V29H27L19 38L11 29H17.800Z" />
      </svg>
      <svg viewBox="0 0 40 48" className="mt-[14px] ml-[45px] h-[48px] w-[40px]">
        <path d="M3 12Q20 5 37 12Q41 26 37 43Q34 48 20 48Q6 48 3 43Q-2 27 3 12Z" fill="#fff" />
        <ellipse cx="20" cy="12.500" rx="16.500" ry="4.500" fill="#bdbdbd" />
        <path d="M8.500 1L11 11M31.500 1L29 11" stroke="#fff" strokeWidth="2" />
        <circle cx="10" cy="28" r="2.700" /><circle cx="29.500" cy="28" r="2.700" />
      </svg>
      <svg viewBox="0 0 62 50" className="mt-[17px] ml-auto h-[50px] w-[62px]">
        <path d="M31 49L0 11Q13 0 31 0T62 11Z" fill="#4d4d4d" />
        <path d="M31 49L8.600 21.500Q18 13 31 13T53.400 21.500Z" fill="#fff" />
      </svg>
      <svg viewBox="0 0 49 49" className="mt-[17px] ml-[6px] h-[49px] w-[49px]">
        <path d="M0 49H49V0Z" fill="#4d4d4d" /><path d="M0 49H29.500V19.500Z" fill="#fff" />
      </svg>
      <svg viewBox="0 0 33 51" className="mt-[16px] ml-[30px] h-[51px] w-[33px]">
        <path d="M8 0H25V5H33V51H0V5H8Z" fill="#fff" /><path d="M9.500 13H26L22 25H28L8.500 46L15 29H7.500Z" />
      </svg>
      <div className="mt-[15px] mr-[28px] ml-[25px] w-[98px] text-[49px] leading-[57px] font-medium whitespace-nowrap">1:30</div>
    </div>
  );
}

function Place({ time, name, pin }: { time: string; name: string; pin: string }) {
  return (
    <div className="flex h-[105px] items-start text-[49px] leading-[57px] whitespace-nowrap">
      <div className="w-[217px] text-black">{time}</div>
      <svg viewBox="0 0 31 49" className="mt-[3px] h-[49px] w-[31px]">
        <path fillRule="evenodd" fill={pin} d="M15.500 0C24.500 0 31 6.500 31 15C31 26 23 37 15.500 49C8 37 0 26 0 15C0 6.500 6.500 0 15.500 0ZM15.500 10.700a5.200 5.200 0 1 0 0 10.400a5.200 5.200 0 1 0 0-10.400Z" />
      </svg>
      <div className="ml-[16px] text-[#444]">{name}</div>
    </div>
  );
}

function Leg({ time, length, distance, children }: { time: string; length: string; distance: string; children: React.ReactNode }) {
  return (
    <div className="flex h-[179px] shrink-0 border-b-4 border-[#eee] text-black">
      <div className="mt-[57px] w-[430px] pl-[77px] text-[52.5px] leading-[53px]">
        <div>{time}</div>
        <div>{length}</div>
      </div>
      <div className="mt-[59px] w-[570px] pl-[76px] text-[77px] leading-[90px]">{distance}</div>
      <div className="flex w-[301px] items-end justify-center pb-[32px]">{children}</div>
    </div>
  );
}

const tabIcons = {
  Diary: (
    <svg viewBox="0 0 77 66" className="h-[66px] w-[77px]" fill="none" stroke="#00d1a9" strokeLinejoin="round" strokeLinecap="round">
      <path d="M2.700 63.500V15L20.500 2.700L38.500 15L56.500 2.700L74.300 15V63.500L56.500 51L38.500 63.500L20.500 51Z" strokeWidth="5.200" />
      <path d="M20.500 4V50M38.500 15V62M56.500 4V50" strokeWidth="5" />
      <path d="M10 32L15 25.500L24 27L29 32L34 36L41 37.500L48 35L53 30L59 25" strokeWidth="3.600" strokeDasharray="1.500 6.500" />
      <path d="M63.500 22L68.500 28M68.500 22L63.500 28" strokeWidth="2.800" />
    </svg>
  ),
  Goals: (
    <svg viewBox="0 0 66 66" className="h-[66px] w-[66px]">
      <rect width="66" height="66" rx="7" fill="#b2b2b2" />
      <path d="M10.500 30.700L26 47L56 15.700" fill="none" stroke="#f5f5f5" strokeWidth="6.500" />
    </svg>
  ),
  Dashboard: (
    <svg viewBox="0 0 77 77" className="h-[77px] w-[77px]">
      <circle cx="38.500" cy="38.500" r="37" fill="none" stroke="#b2b2b2" strokeWidth="2.600" />
      <path d="M1 38C5 45 9 47 13 47C21 47 22 33.500 30 33.500C38 33.500 39 47 46 47C53 47 55 33.500 62 33.500C68 33.500 71 39 75 45A37.500 37.500 0 0 1 1 38Z" fill="#b2b2b2" />
    </svg>
  ),
  Heatmap: (
    <svg viewBox="0 0 55 77" className="h-[77px] w-[55px]" fill="#b2b2b2">
      <path d="M14.200 0C34 3 49 20 49.500 35Q50 42 49 47Q51.500 41 51.500 35Q55 43 55 51C55 67 42 77 27.500 77Q14 77 10.500 62Q9.500 67 12 72.500Q0 65 0 52C0 33 15 30 17.500 16Q20 20 19 29Q24 13 14.200 0Z" />
    </svg>
  ),
  Profile: (
    <svg viewBox="0 0 66 66" className="h-[66px] w-[66px]" fill="#b2b2b2">
      <path d="M33 0C43 0 48 5 48 12Q48 15 47 17Q49 21 46 27Q45 36 42 39V46Q43 48 47 49.500C57 53 66 55 66 61V66H0V61C0 55 9 53 19 49.500Q23 48 24 46V39Q21 36 20 27Q17 21 19 17Q18 15 18 12C18 5 23 0 33 0Z" />
    </svg>
  ),
};

export default function App() {
  return (
    <div className="flex h-[2560px] w-[1440px] flex-col overflow-hidden bg-white font-['Roboto',sans-serif]">
      <StatusBar />
      <header className="relative z-10 flex h-[154px] items-center bg-[#f5f5f5] shadow-[0_10px_18px_-4px_rgba(0,0,0,0.7),0_1px_3px_rgba(0,0,0,0.25)]">
        <MdArrowBack className="ml-[14px] h-[84px] w-[84px] text-[#6b6b6b]" />
        <h1 className="-mt-[5px] ml-[63px] text-[66.5px] leading-[82px] text-[#6b6b6b]">17 March 2017</h1>
        <svg viewBox="0 0 45 73" className="-mt-[2px] mr-[53px] ml-auto h-[73px] w-[45px]">
          <path d="M6.700 23C6.700 12 13 7 22.500 7C32 7 38 12.500 38 20.500C38 33 20.500 33 20.500 49" fill="none" stroke="#444" strokeWidth="13.500" />
          <circle cx="20" cy="64.500" r="8.300" fill="#444" />
        </svg>
      </header>

      <main className="flex h-[1983px] flex-col overflow-hidden pt-[29px] pr-[33px] pl-[35px]">
        <Place time="2:34 PM" name="McGill Terrace Northwest" pin="#35e0bc" />
        <Place time="3:17 PM" name="10th Street Northwest" pin="#ff5252" />

        <section className="relative mt-[10px] h-[959px] w-[1372px] shrink-0 overflow-hidden">
          <MapCanvas />
          <div className="absolute top-[35px] left-[35px] flex w-[119px] flex-col overflow-hidden rounded-[14px] border-[7px] border-black/20 bg-clip-padding">
            <button aria-label="Zoom in" className="flex h-[105px] items-center justify-center rounded-t-[12px] border-b-[3px] border-[#ccc] bg-white">
              <svg viewBox="0 0 38 38" className="-mt-[7px] ml-[7px] h-[38px] w-[38px]"><path d="M14.500 0H23.500V14.500H38V23.500H23.500V38H14.500V23.500H0V14.500H14.500Z" /></svg>
            </button>
            <button aria-label="Zoom out" className="flex h-[105px] items-center justify-center rounded-b-[12px] bg-white">
              <svg viewBox="0 0 31 11" className="mt-[8px] ml-[6px] h-[11px] w-[31px]"><path d="M0 0H31V11H0Z" /></svg>
            </button>
          </div>
          <div className="absolute inset-x-0 bottom-0 h-[112px] bg-white/70 px-[17.5px] text-[38.5px] leading-[56px] text-[#333]">
            <div className="-mt-[2px]">
              <span className="text-[#0078a8]">Leaflet</span> | Map tiles by <span className="text-[#0078a8]">Stamen Design</span>, under <span className="text-[#0078a8]">CC BY 3.0</span>. Data by
              <br />
              <span className="text-[#0078a8]">OpenStreetMap</span>, under <span className="text-[#0078a8]">ODbL</span>.
            </div>
          </div>
        </section>

        <section className="flex h-[409px] shrink-0 pt-[90px] pl-[70px]">
          <div className="w-[411px]">
            <div className="text-[59.500px] leading-[68px] text-[#ccc]">Distance</div>
            <div className="text-[52.500px] leading-[67px] text-black">5 km</div>
          </div>
          <div className="w-[434px]">
            <div className="text-[59.500px] leading-[68px] text-[#ccc]">Time</div>
            <div className="text-[52.500px] leading-[67px] text-black">43 m</div>
          </div>
          <div className="flex flex-col">
            <div className="flex h-[76px] items-start pt-[7px] pl-[29px]">
              <Walk className="h-[47px] w-[28px]" />
              <Bike className="mt-[3px] ml-[105px] h-[40px] w-[46px]" />
            </div>
            <div className="h-[83px] pt-[7px] pl-[29px]"><Gauge className="h-[34px] w-[46px]" /></div>
            <div className="flex pl-[11px] text-[35px] leading-[40px] text-[#387ef5]">
              <div className="w-[135px]">16%</div>
              <div className="w-[135px]">82%</div>
              <div>1%</div>
            </div>
          </div>
        </section>

        <Leg time="2:34 PM" length="13 m" distance="0.781 km"><Walk className="h-[78px] w-[47px]" /></Leg>
        <Leg time="2:47 PM" length="6 m" distance="1 km"><Bike className="mb-[6px] h-[66px] w-[77px]" /></Leg>
      </main>

      <nav className="z-10 flex h-[171px] bg-[#f5f5f5] pl-px shadow-[0_-2px_6px_rgba(0,0,0,0.04)]">
        {(Object.keys(tabIcons) as (keyof typeof tabIcons)[]).map((name) => (
          <div key={name} className="flex w-[288px] shrink-0 flex-col items-center">
            <div className="mt-[24px] flex h-[77px] items-center">{tabIcons[name]}</div>
            <div className={name === "Diary" ? "mt-[12px] text-[35px] leading-[42px] text-[#00d1a9]" : "mt-[12px] text-[35px] leading-[42px] text-[#b2b2b2]"}>{name}</div>
          </div>
        ))}
      </nav>

      <footer className="z-10 flex h-[168px] items-center bg-black">
        <svg viewBox="0 0 57 66" className="ml-[287px] h-[66px] w-[57px]" fill="none" stroke="#e6e6e6" strokeWidth="7" strokeLinejoin="round"><path d="M4.500 33L53 3.800V62.200Z" /></svg>
        <svg viewBox="0 0 66 66" className="ml-[344px] h-[66px] w-[66px]" fill="none" stroke="#e6e6e6" strokeWidth="7"><circle cx="33" cy="33" r="29.300" /></svg>
        <svg viewBox="0 0 58 58" className="ml-[343px] h-[58px] w-[58px]" fill="none" stroke="#e6e6e6" strokeWidth="7"><rect x="3.500" y="3.500" width="51" height="51" rx="1.500" strokeLinejoin="round" /></svg>
      </footer>
    </div>
  );
}
